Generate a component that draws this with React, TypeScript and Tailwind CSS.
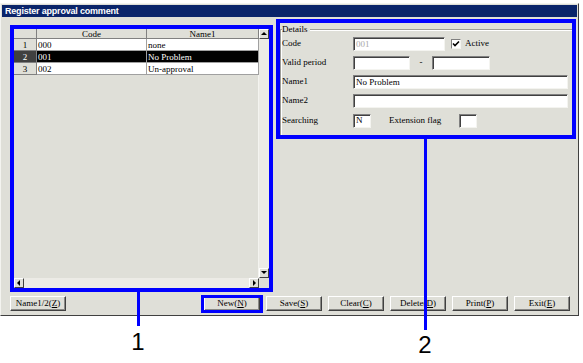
import React from 'react';

const serif = "font-['Liberation_Serif','Times_New_Roman',serif]";

function Btn({ label, mn, w = 'w-[56px]' }: { label: string; mn: string; w?: string }) {
  return (
    <div
      className={`${w} h-[15px] flex items-center justify-center bg-[#dfdfd8] border border-t-white border-l-white border-r-[#404040] border-b-[#404040] shadow-[inset_-1px_-1px_0_#8a8a86] text-[9px] leading-none text-black`}
    >
      <span>
        {label}(<span className="underline">{mn}</span>)
      </span>
    </div>
  );
}

function Field({ w, children, grey }: { w: string; children?: React.ReactNode; grey?: boolean }) {
  return (
    <div
      className={`${w} h-[14px] bg-white border border-t-[#808080] border-l-[#808080] border-r-[#f4f4f0] border-b-[#f4f4f0] shadow-[inset_1px_1px_0_#404040] pl-[2px] flex items-center text-[9px] leading-none ${grey ? 'text-[#a8a8a8]' : 'text-black'}`}
    >
      {children}
    </div>
  );
}

function Arrow({ dir }: { dir: 'up' | 'down' | 'left' | 'right' }) {
  const pts = {
    up: '1,5 4,2 7,5',
    down: '1,2 4,5 7,2',
    left: '5,1 2,4 5,7',
    right: '3,1 6,4 3,7',
  }[dir];
  return (
    <div className="w-[10px] h-[10px] shrink-0 flex items-center justify-center bg-[#dfdfd8] border border-t-white border-l-white border-r-[#404040] border-b-[#404040]">
      <svg width="8" height="8" viewBox="0 0 8 8">
        <polygon points={pts} fill="#000" />
      </svg>
    </div>
  );
}

const rows = [
  { n: '1', code: '000', name: 'none' },
  { n: '2', code: '001', name: 'No Problem', sel: true },
  { n: '3', code: '002', name: 'Un-approval' },
];

export default function App() {
  return (
    <div className={`relative w-[583px] h-[363px] bg-white overflow-hidden ${serif}`}>
      {/* window */}
      <div className="mt-[3px] w-[579px] h-[313px] bg-[#dfdfd8] border border-t-[#f4f4f0] border-l-[#f4f4f0] border-r-[#404040] border-b-[#404040] p-px flex flex-col">
        <div className="h-[12px] bg-[#0a246a] text-white font-['Liberation_Sans',Arial,sans-serif] font-bold text-[9px] leading-[12px] tracking-[-0.2px] pl-[3px]">
          Register approval comment
        </div>

        <div className="flex items-start pt-[2px]">
          {/* 1: list */}
          <div className="ml-[8px] mt-[6px] w-[263px] h-[267px] border-4 border-[#0000ff] flex flex-col">
            <div className="flex flex-1 min-h-0">
              <div className="w-[245px] flex flex-col">
                <div className="flex h-[10px] text-[9px] leading-[10px] text-black">
                  <div className="w-[23px] bg-[#dfdfd8] border-r border-b border-[#808080]" />
                  <div className="w-[110px] text-center bg-[#dfdfd8] border-r border-b border-[#808080]">Code</div>
                  <div className="w-[112px] text-center bg-[#dfdfd8] border-r border-b border-[#808080]">Name1</div>
                </div>
                {rows.map((r) => (
                  <div key={r.n} className="flex h-[12px] text-[9px] leading-[12px]">
                    <div
                      className={`w-[23px] text-center border-r border-b border-[#808080] ${r.sel ? 'bg-[#404040] text-white' : 'bg-[#dfdfd8] text-black'}`}
                    >
                      {r.n}
                    </div>
                    <div
                      className={`w-[110px] pl-px border-r border-b border-[#a0a0a0] ${r.sel ? 'bg-black text-white' : 'bg-white text-black'}`}
                    >
                      {r.code}
                    </div>
                    <div
                      className={`w-[112px] pl-px border-r border-b border-[#a0a0a0] ${r.sel ? 'bg-black text-white' : 'bg-white text-black'}`}
                    >
                      {r.name}
                    </div>
                  </div>
                ))}
                <div className="flex-1 border-r border-[#f4f4f0]" />
              </div>
              <div className="w-[10px] ml-auto flex flex-col bg-[#ecebe6]">
                <Arrow dir="up" />
                <div className="flex-1" />
                <Arrow dir="down" />
              </div>
            </div>
            <div className="flex h-[10px]">
              <Arrow dir="left" />
              <div className="flex-1 bg-[#ecebe6]" />
              <Arrow dir="right" />
              <div className="w-[10px] bg-[#dfdfd8]" />
            </div>
          </div>

          {/* 2: details */}
          <div className="ml-[3px] w-[300px] h-[120px] border-4 border-[#0000ff] text-[9px] text-black overflow-hidden">
            <div className="h-[120px] mt-[6px] border-l border-t border-[#9c9c98] shadow-[inset_1px_1px_0_#ffffff]">
              <div className="-mt-[6px] ml-[1px] w-fit bg-[#dfdfd8] pr-[2px] leading-[10px]">Details</div>
              <div className="pl-[1px] pt-[3px] flex flex-col gap-[5px]">
                <div className="flex items-center h-[14px]">
                  <div className="w-[71px]">Code</div>
                  <Field w="w-[92px]" grey>001</Field>
                  <div className="ml-[6px] w-[10px] h-[10px] bg-white border border-t-[#808080] border-l-[#808080] border-r-[#f4f4f0] border-b-[#f4f4f0] flex items-center justify-center">
                    <svg width="8" height="8" viewBox="0 0 8 8">
                      <polyline points="1,3.5 3,5.5 7,1.5" fill="none" stroke="#000" strokeWidth="1.6" />
                    </svg>
                  </div>
                  <div className="ml-[4px]">Active</div>
                </div>
                <div className="flex items-center h-[14px]">
                  <div className="w-[71px]">Valid period</div>
                  <Field w="w-[57px]" />
                  <div className="w-[22px] text-center">-</div>
                  <Field w="w-[58px]" />
                </div>
                <div className="flex items-center h-[14px]">
                  <div className="w-[71px]">Name1</div>
                  <Field w="w-[215px]">No Problem</Field>
                </div>
                <div className="flex items-center h-[14px]">
                  <div className="w-[71px]">Name2</div>
                  <Field w="w-[215px]" />
                </div>
                <div className="flex items-center h-[15px]">
                  <div className="w-[71px]">Searching</div>
                  <Field w="w-[18px]">N</Field>
                  <div className="ml-[18px] w-[70px]">Extension flag</div>
                  <Field w="w-[18px]" />
                </div>
              </div>
            </div>
          </div>
        </div>

        {/* buttons */}
        <div className="flex items-center mt-[4px] pl-[8px] pr-[7px]">
          <Btn label="Name1/2" mn="Z" w="w-[56px]" />
          <div className="ml-auto flex gap-[6px]">
            <div className="relative">
              <Btn label="New" mn="N" />
              <div className="absolute -left-[3px] -right-[3px] -top-[1px] -bottom-[2px] border-[3px] border-[#0000ff]" />
            </div>
            <Btn label="Save" mn="S" />
            <Btn label="Clear" mn="C" />
            <Btn label="Delete" mn="D" />
            <Btn label="Print" mn="P" />
            <Btn label="Exit" mn="E" />
          </div>
        </div>
      </div>

      {/* callouts */}
      <div className="absolute left-[137px] top-[292px] w-[3px] h-[34px] bg-[#0000ff]" />
      <div className="absolute left-[128px] top-[328px] w-[20px] text-center font-['Liberation_Sans',Arial,sans-serif] text-[24px] leading-[28px] text-black">
        1
      </div>
      <div className="absolute left-[424px] top-[139px] w-[3px] h-[191px] bg-[#0000ff]" />
      <div className="absolute left-[415px] top-[331px] w-[20px] text-center font-['Liberation_Sans',Arial,sans-serif] text-[24px] leading-[28px] text-black">
        2
      </div>
    </div>
  );
}
